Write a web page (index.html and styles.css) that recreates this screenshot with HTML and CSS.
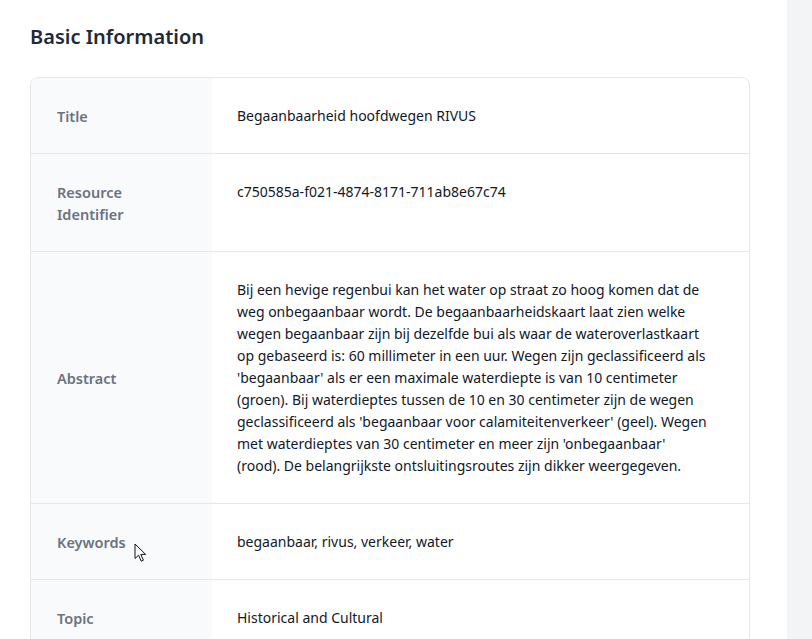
FILE: index.html
```html
<!DOCTYPE html>
<html lang="en">
<head>
<meta charset="UTF-8">
<meta name="viewport" content="width=device-width, initial-scale=1.0">
<title>Basic Information</title>
<link rel="stylesheet" href="styles.css">
</head>
<body>
<div class="page">
    <main class="content">
        <h2 class="section-title">Basic Information</h2>
        <div class="info-card">
            <div class="info-row">
                <div class="info-label">Title</div>
                <div class="info-value">Begaanbaarheid hoofdwegen RIVUS</div>
            </div>
            <div class="info-row">
                <div class="info-label">Resource Identifier</div>
                <div class="info-value">c750585a-f021-4874-8171-711ab8e67c74</div>
            </div>
            <div class="info-row">
                <div class="info-label">Abstract</div>
                <div class="info-value abstract">Bij een hevige regenbui kan het water op straat zo hoog komen dat de<br>
                    weg onbegaanbaar wordt. De begaanbaarheidskaart laat zien welke<br>
                    wegen begaanbaar zijn bij dezelfde bui als waar de wateroverlastkaart<br>
                    op gebaseerd is: 60 millimeter in een uur. Wegen zijn geclassificeerd als<br>
                    'begaanbaar' als er een maximale waterdiepte is van 10 centimeter<br>
                    (groen). Bij waterdieptes tussen de 10 en 30 centimeter zijn de wegen<br>
                    geclassificeerd als 'begaanbaar voor calamiteitenverkeer' (geel). Wegen<br>
                    met waterdieptes van 30 centimeter en meer zijn 'onbegaanbaar'<br>
                    (rood). De belangrijkste ontsluitingsroutes zijn dikker weergegeven.</div>
            </div>
            <div class="info-row">
                <div class="info-label">Keywords</div>
                <div class="info-value">begaanbaar, rivus, verkeer, water</div>
            </div>
            <div class="info-row">
                <div class="info-label">Topic</div>
                <div class="info-value">Historical and Cultural</div>
            </div>
        </div>
    </main>
    <aside class="side-strip"></aside>
</div>

<!-- mouse pointer captured in the screenshot -->
<svg class="pointer" width="14" height="20" viewBox="0 0 14 20">
    <path d="M1 1 L1 15.5 L4.6 12.2 L7.2 18.2 L9.4 17.2 L6.8 11.4 L11.6 11.4 Z" fill="#fff" stroke="#111" stroke-width="1" stroke-linejoin="round"/>
</svg>
</body>
</html>
```

FILE: styles.css
```css
body {
    margin: 0;
    font-family: "Noto Sans", "Open Sans", sans-serif;
    background-color: #fff;
    color: #1f2937;
    overflow: hidden;
    position: relative;
}

.page {
    display: flex;
    min-height: 100vh;
}

.content {
    flex: 1;
    padding: 22px 37px 0 30px;
}

.side-strip {
    width: 25px;
    background-color: #f3f4f6;
}

.section-title {
    margin: 0 0 25px 0;
    font-size: 20px;
    font-weight: 600;
    line-height: 30px;
    color: #1f2937;
}

.info-card {
    border: 1px solid #e5e7eb;
    border-radius: 8px;
    overflow: hidden;
}

.info-row {
    display: flex;
    border-bottom: 1px solid #e5e7eb;
}

.info-label {
    width: 181px;
    flex-shrink: 0;
    box-sizing: border-box;
    padding: 26.5px 24px 26.5px 26px;
    background-color: #f9fafb;
    color: #6b7280;
    font-size: 14.5px;
    font-weight: 600;
    line-height: 22px;
    display: flex;
    align-items: center;
}

.info-value {
    flex: 1;
    padding: 26.5px 18px 26.5px 25px;
    font-size: 14px;
    line-height: 22px;
    color: #111827;
}

.abstract {
    white-space: nowrap;
}

.pointer {
    position: absolute;
    left: 134px;
    top: 543px;
}
```
